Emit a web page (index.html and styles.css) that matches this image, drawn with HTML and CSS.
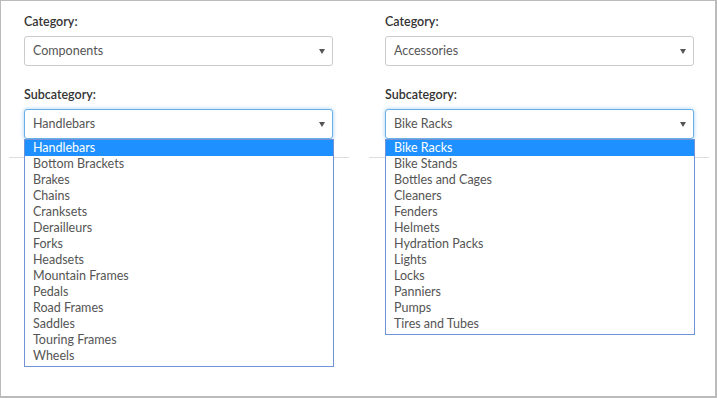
FILE: index.html
```html
<!DOCTYPE html>
<html lang="en">
<head>
    <meta charset="UTF-8">
    <title>Category filter</title>
    <link rel="stylesheet" href="styles.css">
</head>
<body>
    <div class="panel">
        <!-- Columna izquierda -->
        <div class="col">
            <div class="fields">
                <div class="field">
                    <label>Category:</label>
                    <div class="select">Components<span class="caret"></span></div>
                </div>
                <div class="field">
                    <label>Subcategory:</label>
                    <div class="select-wrap">
                        <div class="select focus">Handlebars<span class="caret"></span></div>
                        <ul class="options">
                            <li class="selected">Handlebars</li>
                            <li>Bottom Brackets</li>
                            <li>Brakes</li>
                            <li>Chains</li>
                            <li>Cranksets</li>
                            <li>Derailleurs</li>
                            <li>Forks</li>
                            <li>Headsets</li>
                            <li>Mountain Frames</li>
                            <li>Pedals</li>
                            <li>Road Frames</li>
                            <li>Saddles</li>
                            <li>Touring Frames</li>
                            <li>Wheels</li>
                        </ul>
                    </div>
                </div>
            </div>
            <hr>
        </div>

        <!-- Columna derecha -->
        <div class="col">
            <div class="fields">
                <div class="field">
                    <label>Category:</label>
                    <div class="select">Accessories<span class="caret"></span></div>
                </div>
                <div class="field">
                    <label>Subcategory:</label>
                    <div class="select-wrap">
                        <div class="select focus">Bike Racks<span class="caret"></span></div>
                        <ul class="options">
                            <li class="selected">Bike Racks</li>
                            <li>Bike Stands</li>
                            <li>Bottles and Cages</li>
                            <li>Cleaners</li>
                            <li>Fenders</li>
                            <li>Helmets</li>
                            <li>Hydration Packs</li>
                            <li>Lights</li>
                            <li>Locks</li>
                            <li>Panniers</li>
                            <li>Pumps</li>
                            <li>Tires and Tubes</li>
                        </ul>
                    </div>
                </div>
            </div>
            <hr>
        </div>
    </div>
</body>
</html>
```

FILE: styles.css
```css
body {
    margin: 0;
    font-family: Lato, "Open Sans", sans-serif;
    font-size: 12.5px;
    color: #555;
    background: #fff;
}

.panel {
    box-sizing: border-box;
    width: 717px;
    height: 398px;
    border: 1px solid #bbb;
    border-right-width: 2px;
    border-bottom-width: 2px;
    padding: 0 7px 0 8px;
    display: flex;
    gap: 20px;
}

.col {
    flex: none;
    width: 340px;
}

.fields {
    padding: 13px 16px 0 15px;
}

.col + .col .fields {
    padding: 13px 15px 0 16px;
}

.field + .field {
    margin-top: 21px;
}

label {
    display: block;
    font-weight: 600;
    color: #333;
    line-height: 16px;
    margin-bottom: 6px;
}

.select {
    box-sizing: border-box;
    position: relative;
    height: 30px;
    line-height: 28px;
    padding: 0 8px;
    border: 1px solid #ccc;
    border-radius: 3px;
    background: #fff;
}

.select.focus {
    border-color: #66afe9;
    box-shadow: 0 0 4px rgba(102, 175, 233, 0.6);
}

/* Flecha del select */
.caret {
    position: absolute;
    right: 7px;
    top: 12px;
    width: 0;
    height: 0;
    border-left: 3px solid transparent;
    border-right: 3px solid transparent;
    border-top: 5px solid #555;
}

.select-wrap {
    position: relative;
}

/* Lista desplegada */
.options {
    position: absolute;
    top: 100%;
    left: 0;
    right: -1px;
    z-index: 5;
    margin: 0;
    padding: 0 0 2px;
    list-style: none;
    background: #fff;
    border: 1px solid #7193d6;
}

.options li {
    height: 16px;
    line-height: 16px;
    padding-left: 8px;
    color: #555;
}

.options li.selected {
    background: #1e90ff;
    color: #fff;
}

hr {
    margin: 18px 0 0;
    border: 0;
    border-top: 1px solid #ddd;
}
```
